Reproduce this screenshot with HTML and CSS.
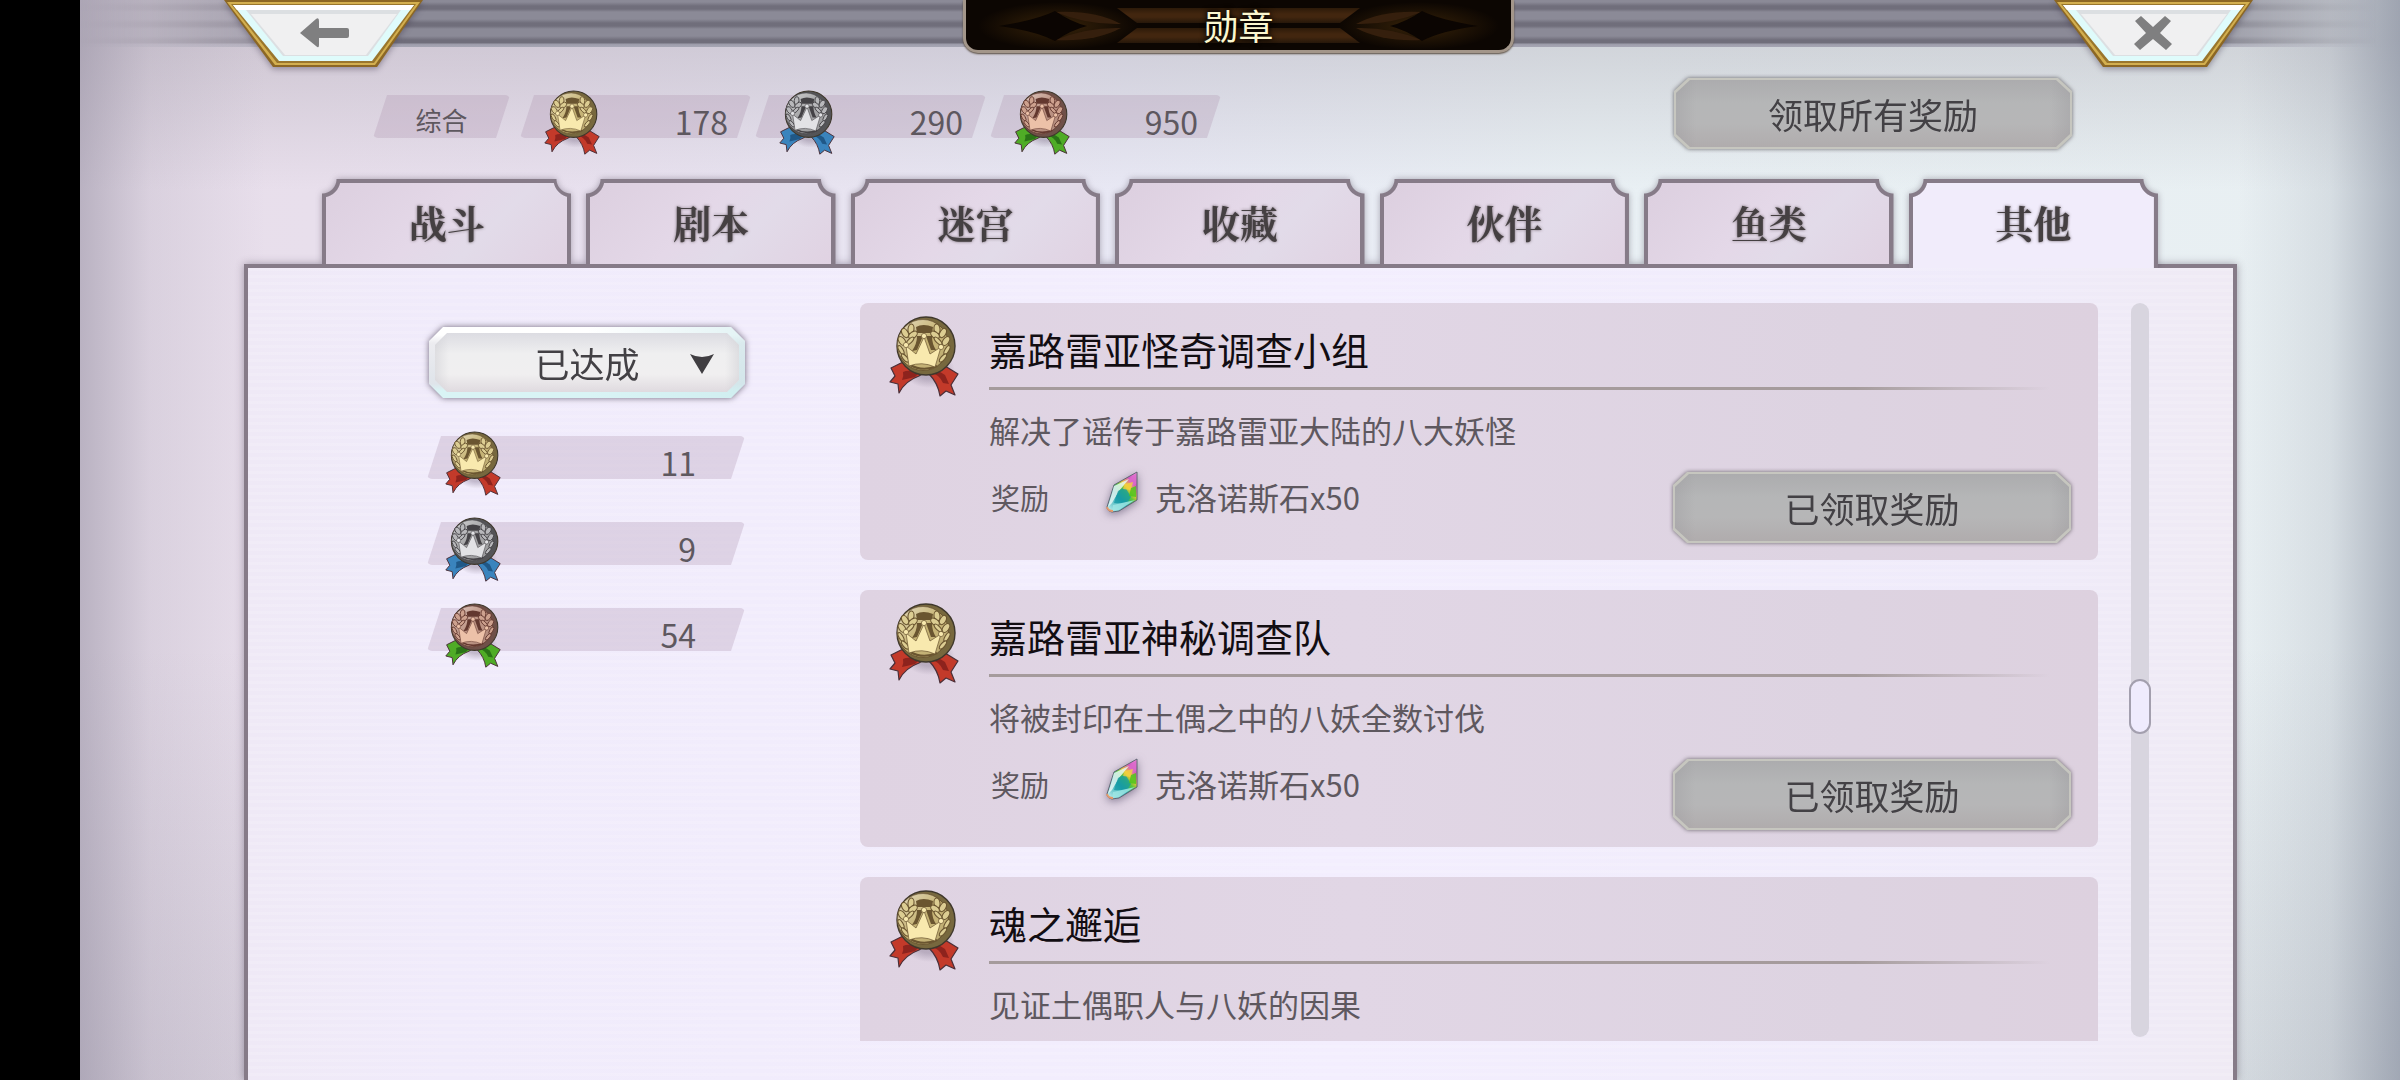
FILE: index.html
```html
<!DOCTYPE html>
<html lang="zh-CN">
<head>
<meta charset="utf-8">
<meta name="viewport" content="width=device-width, initial-scale=1">
<title>勋章</title>
<link rel="stylesheet" href="styles.css">
</head>
<body>
<svg class="defs" aria-hidden="true">
  <defs>
    <linearGradient id="sheen" x1="0" y1="0" x2="1" y2="1">
      <stop offset="0" stop-color="#fff" stop-opacity=".55"/>
      <stop offset=".5" stop-color="#fff" stop-opacity="0"/>
      <stop offset="1" stop-color="#000" stop-opacity=".12"/>
    </linearGradient>
    <linearGradient id="gem-fill" x1="1" y1="0" x2=".2" y2="1">
      <stop offset="0" stop-color="#f08ad8"/>
      <stop offset=".22" stop-color="#d257c4"/>
      <stop offset=".38" stop-color="#efc33a"/>
      <stop offset=".5" stop-color="#58c738"/>
      <stop offset=".68" stop-color="#1aa0a8"/>
      <stop offset="1" stop-color="#a9e4e6"/>
    </linearGradient>
    <radialGradient id="medal-shade">
      <stop offset=".5" stop-color="#8a7d94" stop-opacity=".45"/>
      <stop offset="1" stop-color="#8a7d94" stop-opacity="0"/>
    </radialGradient>
    <linearGradient id="bar-brown" x1="0" y1="0" x2="0" y2="1">
      <stop offset="0" stop-color="#2c1a09"/>
      <stop offset=".4" stop-color="#42260f"/>
      <stop offset=".6" stop-color="#42260f"/>
      <stop offset="1" stop-color="#26170a"/>
    </linearGradient>
    <g id="laurel">
      <ellipse cx="22" cy="13" rx="3" ry="5" transform="rotate(6 22 13)"/>
      <ellipse cx="16" cy="17" rx="3" ry="5" transform="rotate(-30 16 17)"/>
      <ellipse cx="24" cy="19" rx="3" ry="5" transform="rotate(50 24 19)"/>
      <ellipse cx="13" cy="25" rx="3" ry="5" transform="rotate(-35 13 25)"/>
      <ellipse cx="21" cy="25" rx="2" ry="5" transform="rotate(45 21 25)"/>
      <ellipse cx="12" cy="34" rx="2" ry="5" transform="rotate(-30 12 34)"/>
      <ellipse cx="16" cy="42" rx="2" ry="5" transform="rotate(-40 16 42)"/>
    </g>
    <symbol id="medal" viewBox="0 0 70 82">
      <ellipse cx="40" cy="54" rx="26" ry="18" fill="url(#medal-shade)"/>
      <g stroke="#4a2f38" stroke-width="1.2" stroke-linejoin="round">
        <path class="m-ribbon" d="M12 47 2 52 6 60 1 66 9 68 10 77Q16 65 30 60L36 56 24 44Z"/>
        <path class="m-ribbon" d="M40 58Q49 67 51 80L57 75 66 79 62 69 69 58 56 50 40 54Z"/>
        <path class="m-fold" d="M14 56Q20 53 30 57L26 61Q18 63 13 64Q15 60 14 56Z"/>
        <path class="m-fold" d="M42 57Q50 58 54 67L60 68 56 59 48 54Z"/>
      </g>
      <circle class="m-rim" cx="37" cy="30" r="29" stroke="#3f382c" stroke-width="1.4"/>
      <circle class="m-face" cx="34" cy="29" r="25.5"/>
      <circle cx="34" cy="29" r="25.5" fill="url(#sheen)"/>
      <path class="m-dark" d="M27 11Q34 7 44 11L43 17 28 17Z"/>
      <path class="m-dark" d="M28 20 34 20 28 34 23 35Q28 28 28 20ZM37 20 43 20Q43 28 47 34L42 34Z"/>
      <g class="m-leaf">
        <use href="#laurel"/>
        <use href="#laurel" transform="matrix(-1 0 0 1 70 0)"/>
      </g>
      <path class="m-line" d="M21 49Q34 56 48 50"/>
      <path class="m-crown" d="M20 50 17 30 27 38 35 21 41 38 52 31 46 51Q33 45 20 50Z"/>
      <g class="m-crown">
        <circle cx="17" cy="29" r="2.6"/><circle cx="35" cy="20" r="2.6"/><circle cx="52" cy="31" r="2.6"/>
      </g>
    </symbol>
    <symbol id="gem" viewBox="0 0 34 42">
      <path d="M32 1 9 14 2 36Q2 40 7 41L14 40 32 29Z" fill="url(#gem-fill)" stroke="#5f6673" stroke-width="1"/>
      <path d="M9 15 24 8 14 20 7 32 3 36Z" fill="#e6f7f3" opacity=".85"/>
      <path d="M13 20 20 16 26 26 22 32 9 32Z" fill="#159aa6" opacity=".75"/>
      <path d="M24 8 31 3 31 13 26 16Z" fill="#db6bcb" opacity=".75"/>
      <path d="M20 13 28 11 26 19 18 18Z" fill="#f2d23c" opacity=".8"/>
      <path d="M26 17 31 15 31 26 24 25Z" fill="#4bc61f" opacity=".85"/>
      <path d="M8 34 30 29 14 39 7 40Z" fill="#9fe6e4" opacity=".85"/>
      <path d="M2 36Q3 40 8 40" fill="none" stroke="#e49a6c" stroke-width="2"/>
    </symbol>
    <g id="banner-half">
      <path d="M154 8H276V23H174Z" fill="url(#bar-brown)"/>
      <path d="M174 28H276V43H154Z" fill="url(#bar-brown)"/>
      <path d="M92 12Q132 10 158 24Q124 25 92 12Z" fill="#351f0d"/>
      <path d="M92 40Q132 42 158 28Q124 27 92 40Z" fill="#351f0d"/>
      <path d="M36 26Q74 20 92 11Q108 22 124 26Q108 30 92 41Q74 31 36 26Z" fill="#0b0502"/>
    </g>
    <radialGradient id="banner-glow">
      <stop offset=".2" stop-color="#332008" stop-opacity=".9"/>
      <stop offset="1" stop-color="#332008" stop-opacity="0"/>
    </radialGradient>
    <g id="plate">
      <path d="M0 0H199L153 67H49Z" fill="#8c6724"/>
      <path d="M3 2H196L151 65H51Z" fill="#d3af4f"/>
      <path d="M7 4H192L150 63H53Z" fill="#9a762c"/>
      <path d="M9 5H190L148 61H55Z" fill="#dffbfb"/>
      <path d="M9 5H190L186 10H13Z" fill="#fff"/>
      <path d="M22 10H177L144 56H59Z" fill="#dcdfe2"/>
      <path d="M27 14H173L142 55H61Z" fill="#f0f0f1"/>
    </g>
  </defs>
</svg>

<div class="screen">
  <header class="topbar">
    <button class="corner-btn" type="button" aria-label="返回">
      <svg viewBox="0 0 199 67" aria-hidden="true"><use href="#plate"/><path d="M76 33 92 19Q95 17 95 21V28H123Q125 28 125 30V36Q125 38 123 38H95V45Q95 49 92 46Z" fill="#7f7f80"/></svg>
    </button>
    <div class="banner">
      <svg class="banner-art" viewBox="0 0 545 50" aria-hidden="true">
        <ellipse cx="92" cy="26" rx="80" ry="24" fill="url(#banner-glow)"/>
        <ellipse cx="453" cy="26" rx="80" ry="24" fill="url(#banner-glow)"/>
        <use href="#banner-half" transform="translate(-3 0)"/>
        <use href="#banner-half" transform="matrix(-1 0 0 1 548 0)"/>
      </svg>
      <h1 class="banner-title">勋章</h1>
    </div>
    <button class="corner-btn" type="button" aria-label="关闭">
      <svg viewBox="0 0 199 67" aria-hidden="true"><use href="#plate"/><path d="M81 21 87 16 99 27 111 16 117 21 106 33 118 44 112 50 99 39 86 50 80 44 92 33Z" fill="#7f7f80"/></svg>
    </button>
  </header>

  <section class="summary">
    <ul class="totals">
      <li class="pill pill-label"><span>综合</span></li>
      <li class="pill"><svg class="medal gold"><use href="#medal"/></svg><span class="count">178</span></li>
      <li class="pill"><svg class="medal silver"><use href="#medal"/></svg><span class="count">290</span></li>
      <li class="pill"><svg class="medal bronze"><use href="#medal"/></svg><span class="count">950</span></li>
    </ul>
    <button class="plate-btn" type="button"><span>领取所有奖励</span></button>
  </section>

  <nav class="tabs">
    <button class="tab" type="button"><span>战斗</span></button>
    <button class="tab" type="button"><span>剧本</span></button>
    <button class="tab" type="button"><span>迷宫</span></button>
    <button class="tab" type="button"><span>收藏</span></button>
    <button class="tab" type="button"><span>伙伴</span></button>
    <button class="tab" type="button"><span>鱼类</span></button>
    <button class="tab active" type="button" aria-current="page"><span>其他</span></button>
  </nav>

  <main class="panel">
    <aside class="side">
      <div class="filter">
        <select class="filter-select" aria-label="筛选">
          <option>已达成</option>
        </select>
        <svg class="filter-arrow" viewBox="0 0 24 20" aria-hidden="true"><path d="M0 0Q12 6 24 0L12 20Z" fill="#403e42"/></svg>
      </div>
      <ul class="counts">
        <li class="pill"><svg class="medal gold"><use href="#medal"/></svg><span class="count">11</span></li>
        <li class="pill"><svg class="medal silver"><use href="#medal"/></svg><span class="count">9</span></li>
        <li class="pill"><svg class="medal bronze"><use href="#medal"/></svg><span class="count">54</span></li>
      </ul>
    </aside>

    <div class="list">
      <article class="card">
        <svg class="medal large gold"><use href="#medal"/></svg>
        <div class="card-body">
          <h2 class="card-title">嘉路雷亚怪奇调查小组</h2>
          <p class="card-desc">解决了谣传于嘉路雷亚大陆的八大妖怪</p>
          <div class="reward">
            <span class="reward-label">奖励</span>
            <svg class="gem"><use href="#gem"/></svg>
            <span class="reward-item">克洛诺斯石x50</span>
            <button class="plate-btn" type="button"><span>已领取奖励</span></button>
          </div>
        </div>
      </article>
      <article class="card">
        <svg class="medal large gold"><use href="#medal"/></svg>
        <div class="card-body">
          <h2 class="card-title">嘉路雷亚神秘调查队</h2>
          <p class="card-desc">将被封印在土偶之中的八妖全数讨伐</p>
          <div class="reward">
            <span class="reward-label">奖励</span>
            <svg class="gem"><use href="#gem"/></svg>
            <span class="reward-item">克洛诺斯石x50</span>
            <button class="plate-btn" type="button"><span>已领取奖励</span></button>
          </div>
        </div>
      </article>
      <article class="card">
        <svg class="medal large gold"><use href="#medal"/></svg>
        <div class="card-body">
          <h2 class="card-title">魂之邂逅</h2>
          <p class="card-desc">见证土偶职人与八妖的因果</p>
        </div>
      </article>
    </div>

    <div class="scroll"><div class="thumb"></div></div>
  </main>
</div>
</body>
</html>
```

FILE: styles.css
```css
* { box-sizing: border-box; }

body {
  margin: 0;
  background: #000;
  color: #5e585f;
  font-family: "Noto Sans CJK SC", "Noto Sans", sans-serif;
}

h1, h2, p, ul { margin: 0; padding: 0; font-weight: 400; }
ul { list-style: none; }
button, select { margin: 0; padding: 0; border: 0; background: none; font: inherit; color: inherit; cursor: pointer; }
.defs { position: absolute; width: 0; height: 0; }

.screen {
  display: flex;
  flex-direction: column;
  height: 100vh;
  margin-left: 80px;
  overflow: hidden;
  background:
    linear-gradient(to right, rgba(135, 130, 150, .48), rgba(150, 145, 165, .18) 3%, transparent 8%, transparent 93%, rgba(120, 128, 145, .16) 97%, rgba(110, 118, 138, .5)),
    linear-gradient(to bottom, rgba(150, 145, 155, .3) 40px, rgba(150, 145, 155, 0) 190px, rgba(150, 145, 155, 0) 60%, rgba(130, 130, 145, .2)),
    linear-gradient(to right, #e8deea, #e8e0ee 20%, #e8e8f4 45%, #e9f0f4 65%, #e8eff2);
}

/* top bar */
.topbar {
  display: flex;
  justify-content: space-between;
  align-items: flex-start;
  flex: none;
  height: 47px;
  padding: 0 147px 0 144px;
  position: relative;
}
.topbar::before {
  content: "";
  position: absolute;
  inset: 0;
  background:
    linear-gradient(to bottom, transparent 43px, rgba(190, 190, 205, .5) 44px),
    repeating-linear-gradient(to bottom, #8b8a97 0, #8b8a97 2px, #706e7b 6px, #706e7b 9px, #8b8a97 12px, #8b8a97 17px);
  -webkit-mask: linear-gradient(to right, transparent 0, rgba(0, 0, 0, .45) 6%, #000 14%, #000 90%, transparent 99%);
  mask: linear-gradient(to right, transparent 0, rgba(0, 0, 0, .45) 6%, #000 14%, #000 90%, transparent 99%);
}
.corner-btn { position: relative; width: 199px; height: 67px; filter: drop-shadow(0 2px 3px rgba(60, 50, 70, .45)); }
.corner-btn svg { display: block; width: 199px; height: 67px; }

.banner {
  position: relative;
  width: 551px;
  height: 53px;
  border: 3px solid #a3968a;
  border-top: 0;
  border-radius: 0 0 15px 15px;
  background: #0c0602;
  box-shadow: 0 1px 2px #55493c;
}
.banner-art { display: block; position: absolute; inset: 0; width: 100%; height: 100%; }
.banner-title {
  position: relative;
  color: #fbf7cf;
  font-size: 35px;
  line-height: 50px;
  text-align: center;
  text-shadow: 0 0 4px #000, 0 0 6px #000;
}

/* totals row */
.summary {
  display: flex;
  justify-content: space-between;
  align-items: flex-start;
  flex: none;
  height: 132px;
  padding: 30px 327px 0 293px;
}
.totals { display: flex; gap: 4px; padding-top: 18px; }

.pill {
  display: flex;
  justify-content: space-between;
  align-items: flex-start;
  position: relative;
  width: 231px;
  height: 43px;
  padding: 0 23px 0 24px;
}
.pill::before {
  content: "";
  position: absolute;
  inset: 0;
  border-radius: 5px;
  background: rgba(177, 150, 175, .3);
  clip-path: polygon(14px 0, 100% 0, calc(100% - 14px) 100%, 0 100%);
}
.pill > * { position: relative; }
.pill-label { width: 137px; margin-right: 6px; justify-content: center; padding: 0; font-size: 26px; line-height: 50px; }
.pill .count { font-size: 32px; line-height: 52px; }

.medal { flex: none; width: 56px; height: 66px; margin-top: -5px; }
.medal.large { width: 70px; height: 82px; margin-top: 0; }
.gold { --rim: #77683e; --face: #c6b374; --leaf: #dccd92; --crown: #f8e9ae; --dark: #6a5530; --ribbon: #c33a2a; --fold: #8d231d; }
.silver { --rim: #545457; --face: #a2a2a4; --leaf: #b8b8bb; --crown: #e2e2e5; --dark: #444246; --ribbon: #3a84bd; --fold: #205887; }
.bronze { --rim: #6f5048; --face: #bb9080; --leaf: #cda18e; --crown: #ecc1a8; --dark: #63382f; --ribbon: #4fac26; --fold: #2a7417; }
.m-rim { fill: var(--rim); }
.m-face { fill: var(--face); stroke: var(--dark); stroke-width: 1; }
.m-dark { fill: var(--dark); }
.m-leaf { fill: var(--leaf); stroke: var(--dark); stroke-width: 1.1; }
.m-crown { fill: var(--crown); stroke: var(--dark); stroke-width: .7; }
.m-line { fill: none; stroke: var(--dark); stroke-width: 2; }
.m-ribbon { fill: var(--ribbon); }
.m-fold { fill: var(--fold); stroke: none; }

/* grey octagonal button */
.plate-btn {
  position: relative;
  flex: none;
  width: 400px;
  height: 73px;
  color: #434145;
  font-size: 35px;
  line-height: 73px;
  filter: drop-shadow(0 0 2px rgba(70, 65, 70, .75));
}
.plate-btn::before,
.plate-btn::after {
  content: "";
  position: absolute;
  inset: 1px;
  background: #c6c6bf;
  clip-path: polygon(14px 0, calc(100% - 14px) 0, 100% 13px, 100% calc(100% - 13px), calc(100% - 14px) 100%, 14px 100%, 0 calc(100% - 13px), 0 13px);
}
.plate-btn::after {
  inset: 3px;
  background:
    linear-gradient(to right, rgba(150, 148, 152, .3), transparent 20px, transparent calc(100% - 20px), rgba(150, 148, 152, .3)),
    linear-gradient(to bottom, #acacae, #b5b6b7 35%, #b6b6b7 65%, #b0acad);
}
.plate-btn span { position: relative; z-index: 1; }

/* tabs */
.tabs {
  display: flex;
  align-items: flex-start;
  gap: 15px;
  flex: none;
  height: 85px;
  padding: 0 242px;
  position: relative;
  z-index: 1;
}
.tab {
  --line: #867b88;
  --fill: linear-gradient(135deg, #dccfdf, #e4d8e8 45%, #e2dbe9 65%, #e0d2e2);
  position: relative;
  flex: 1;
  height: 85px;
  color: #454042;
  font-family: "Noto Serif CJK SC", "Noto Sans CJK SC", serif;
  font-size: 38px;
  font-weight: 700;
  line-height: 84px;
  text-shadow: 0 0 3px rgba(80, 70, 75, .8);
  filter: drop-shadow(0 0 3px rgba(70, 60, 80, .4));
  clip-path: inset(-10px -8px 0);
}
.tab::before,
.tab::after {
  --r: 14px;
  --o: 0px;
  content: "";
  position: absolute;
  inset: 0;
  background: var(--line);
  -webkit-mask:
    radial-gradient(circle at var(--o) var(--o), transparent var(--r), #000 calc(var(--r) + 1px)) left / 51% 100% no-repeat,
    radial-gradient(circle at calc(100% - var(--o)) var(--o), transparent var(--r), #000 calc(var(--r) + 1px)) right / 51% 100% no-repeat;
  mask:
    radial-gradient(circle at var(--o) var(--o), transparent var(--r), #000 calc(var(--r) + 1px)) left / 51% 100% no-repeat,
    radial-gradient(circle at calc(100% - var(--o)) var(--o), transparent var(--r), #000 calc(var(--r) + 1px)) right / 51% 100% no-repeat;
}
.tab::after {
  --r: 18px;
  --o: -4px;
  inset: 4px 4px 0;
  background: var(--fill);
}
.tab span { position: relative; z-index: 1; }
.tab.active { --fill: #f1ecfb; height: 89px; padding-bottom: 4px; }

/* panel */
.panel {
  display: flex;
  align-items: stretch;
  flex: 1;
  min-height: 0;
  margin: 0 163px 0 164px;
  padding: 35px 84px 39px 179px;
  border: 4px solid #867b88;
  border-bottom: 0;
  background:
    repeating-linear-gradient(to bottom, rgba(255, 255, 255, .12) 0, rgba(255, 255, 255, .12) 3px, transparent 3px, transparent 7px),
    linear-gradient(to right, #efe9f6, #f0ebfb 10%, #f3eefe 55%, #efebfa 88%, #efeaf4);
  box-shadow: 0 0 8px rgba(70, 60, 80, .45);
}

.side { flex: none; width: 320px; margin-right: 113px; padding-top: 22px; }

.filter { position: relative; height: 75px; filter: drop-shadow(0 0 3px rgba(60, 50, 70, .7)); }
.filter::before {
  content: "";
  position: absolute;
  inset: 2px;
  background:
    linear-gradient(to right, transparent 50%, rgba(200, 232, 235, .5)),
    linear-gradient(to bottom, #fff 8px, #ececf0 16px, #dfe4ea 80%, #d9f4f5 90%);
  clip-path: polygon(14px 0, calc(100% - 14px) 0, 100% 14px, 100% calc(100% - 14px), calc(100% - 14px) 100%, 14px 100%, 0 calc(100% - 14px), 0 14px);
}
.filter-select {
  appearance: none;
  position: absolute;
  inset: 8px;
  width: calc(100% - 16px);
  color: #434145;
  font-size: 35px;
  line-height: 60px;
  text-align: center;
  text-align-last: center;
  background:
    linear-gradient(to right, rgba(205, 205, 210, .5), transparent 14px, transparent calc(100% - 14px), rgba(205, 205, 210, .5)),
    linear-gradient(to bottom, #dcdce2, #efeff0 35%, #f0eff0 70%, #dfdadf);
  clip-path: polygon(12px 0, calc(100% - 12px) 0, 100% 12px, 100% calc(100% - 12px), calc(100% - 12px) 100%, 12px 100%, 0 calc(100% - 12px), 0 12px);
}
.filter-arrow { position: absolute; right: 33px; top: 29px; width: 24px; height: 20px; pointer-events: none; }

.counts { display: flex; flex-direction: column; gap: 43px; padding-top: 36px; }
.counts .pill { width: 318px; padding: 0 49px 0 18px; }

.list { display: flex; flex-direction: column; gap: 30px; flex: 1; min-width: 0; overflow: hidden; }
.card {
  display: flex;
  align-items: flex-start;
  gap: 30px;
  flex: none;
  height: 257px;
  padding: 13px 26px 0 29px;
  border-radius: 8px;
  background: linear-gradient(to right, #dfd3e2, #e1d6e5 40%, #ddd3e1 80%, #ddd1df);
}
.card-body { flex: 1; min-width: 0; }
.card-title {
  height: 74px;
  color: #120d12;
  font-size: 38px;
  line-height: 65px;
  background: linear-gradient(to right, #a59b9c 80%, transparent 98%) bottom / 100% 3px no-repeat;
}
.card-desc { padding-top: 15px; font-size: 31px; line-height: 50px; }
.reward { display: flex; align-items: flex-start; height: 73px; margin-top: 16px; padding-left: 2px; line-height: 52px; }
.reward-label { width: 114px; font-size: 29px; }
.gem { flex: none; width: 34px; height: 42px; margin-right: 16px; filter: drop-shadow(0 2px 4px rgba(80, 70, 100, .6)); }
.reward-item { flex: 1; font-size: 31px; }

.scroll { flex: none; width: 18px; margin: 0 0 4px 33px; padding-top: 376px; border-radius: 9px; background: #d8d5df; }
.thumb { width: 22px; height: 55px; margin-left: -2px; border: 2px solid #a39fae; border-radius: 11px; background: #efebfd; }
```
